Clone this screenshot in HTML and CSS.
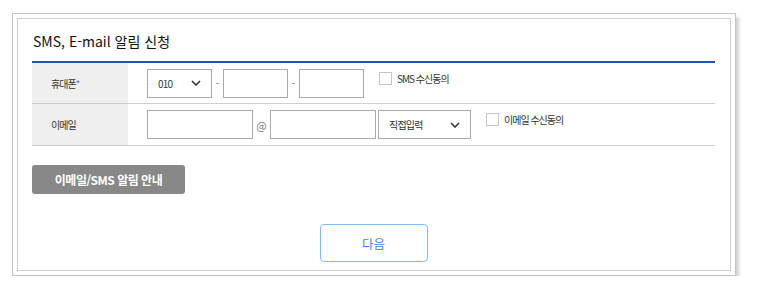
FILE: index.html
```html
<!DOCTYPE html>
<html lang="ko">
<head>
  <meta charset="UTF-8">
  <meta name="viewport" content="width=device-width, initial-scale=1.0">
  <title>SMS, E-mail 알림 신청</title>
  <link rel="stylesheet" href="styles.css">
</head>
<body>
  <div class="popup">
    <div class="popup-inner">
      <h2 class="title">SMS, E-mail 알림 신청</h2>

      <div class="form-table">
        <div class="row">
          <div class="th">휴대폰<span class="req">*</span></div>
          <div class="td">
            <div class="select w-phone">
              <span>010</span>
              <svg width="10" height="6" viewBox="0 0 10 6"><polyline points="1,1 5,5 9,1" fill="none" stroke="#333" stroke-width="1.6"/></svg>
            </div>
            <span class="sep">-</span>
            <input type="text" class="input w-phone">
            <span class="sep">-</span>
            <input type="text" class="input w-phone">
            <label class="agree"><span class="check"></span>SMS 수신동의</label>
          </div>
        </div>

        <div class="row row-mail">
          <div class="th">이메일</div>
          <div class="td">
            <input type="text" class="input w-mail">
            <span class="at">@</span>
            <input type="text" class="input w-mail">
            <div class="select w-domain">
              <span>직접입력</span>
              <svg width="10" height="6" viewBox="0 0 10 6"><polyline points="1,1 5,5 9,1" fill="none" stroke="#333" stroke-width="1.6"/></svg>
            </div>
            <label class="agree"><span class="check"></span>이메일 수신동의</label>
          </div>
        </div>
      </div>

      <button type="button" class="btn-guide">이메일/SMS 알림 안내</button>

      <div class="btn-area">
        <button type="button" class="btn-next">다음</button>
      </div>
    </div>
  </div>
</body>
</html>
```

FILE: styles.css
```css
body {
  margin: 0;
  font-family: "Noto Sans CJK KR", "Noto Sans", sans-serif;
  color: #333;
  background: #fff;
}
.popup {
  margin: 13px 0 0 12px;
  width: 714px;
  padding: 4px;
  border: 1px solid #c4c4c4;
  box-shadow: 3px 4px 3px rgba(0, 0, 0, 0.18);
}
.popup-inner {
  border: 1px solid #cfcfcf;
  padding: 0 15px 8px 14px;
}
.title {
  margin: 0;
  padding: 10px 0 8px 1px;
  font-size: 14px;
  font-weight: 400;
  line-height: 24px;
  color: #111;
  border-bottom: 2px solid #2556ad;
}
.row {
  display: flex;
  border-bottom: 1px solid #cfcfcf;
  height: 40px;
}
.row-mail {
  height: 41px;
}
.th {
  width: 77px;
  padding-left: 19px;
  background: #efefef;
  font-size: 10px;
  letter-spacing: -1px;
  color: #333;
  display: flex;
  align-items: center;
}
.req {
  color: #3a86f0;
}
.td {
  flex: 1;
  display: flex;
  align-items: center;
  padding-left: 19px;
}
.input,
.select {
  box-sizing: border-box;
  height: 29px;
  border: 1px solid #ababab;
  background: #fff;
  margin: 0;
  padding: 0;
  font-family: inherit;
}
.select {
  display: flex;
  align-items: center;
  justify-content: space-between;
  padding: 0 10px 0 10px;
  font-size: 10px;
  letter-spacing: -0.8px;
  color: #333;
}
.w-phone {
  width: 65px;
}
.w-mail {
  width: 106px;
}
.w-domain {
  width: 93px;
  margin-left: 2px;
}
.sep {
  width: 11px;
  text-align: center;
  font-size: 11px;
  color: #888;
}
.at {
  width: 17px;
  text-align: center;
  font-size: 11px;
  color: #777;
}
.agree {
  align-self: flex-start;
  margin: 9px 0 0 15px;
  display: flex;
  align-items: center;
  font-size: 10px;
  letter-spacing: -1px;
  color: #333;
  line-height: 13px;
}
.check {
  box-sizing: border-box;
  width: 13px;
  height: 13px;
  border: 1px solid #c4c4c4;
  background: #fff;
  margin-right: 5px;
}
.btn-guide {
  display: block;
  margin-top: 19px;
  width: 153px;
  height: 29px;
  border: none;
  border-radius: 3px;
  background: #888;
  color: #fff;
  font-family: inherit;
  font-size: 12px;
  font-weight: 700;
  letter-spacing: -0.5px;
  cursor: pointer;
}
.btn-area {
  display: flex;
  justify-content: center;
  margin-top: 30px;
}
.btn-next {
  width: 108px;
  height: 38px;
  border: 1px solid #7fbaf7;
  border-radius: 4px;
  background: #fff;
  color: #3d86f0;
  font-family: inherit;
  font-size: 12.5px;
  cursor: pointer;
}
```
